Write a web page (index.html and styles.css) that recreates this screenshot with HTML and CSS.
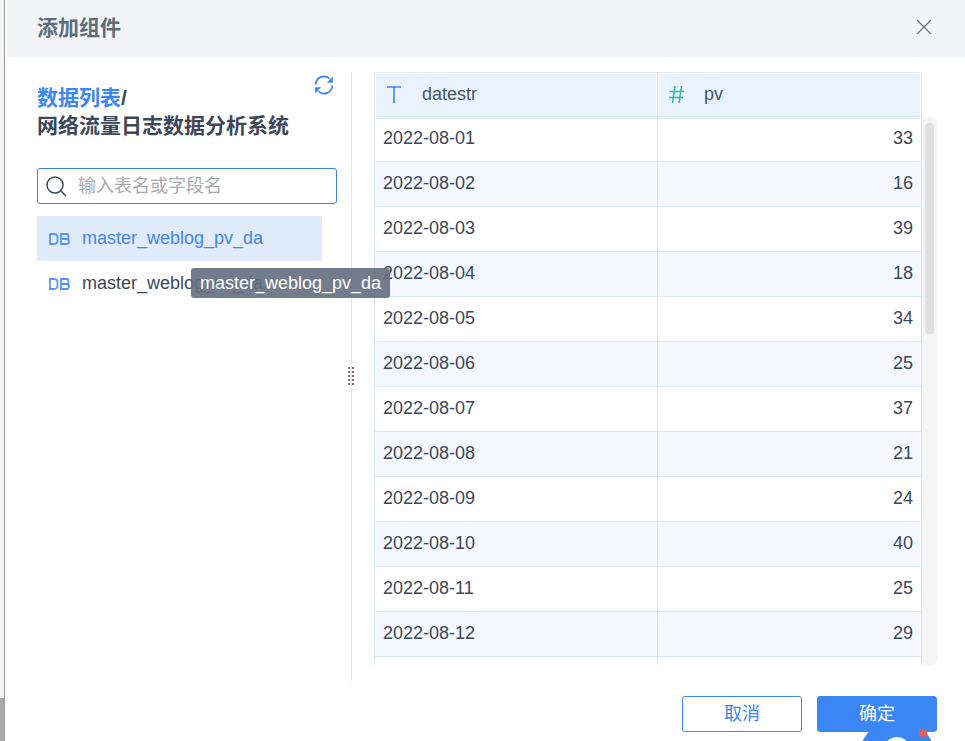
FILE: index.html
```html
<!DOCTYPE html>
<html lang="zh-CN">
<head>
    <meta charset="UTF-8">
    <title>添加组件</title>
    <link rel="stylesheet" href="styles.css">
</head>
<body>
    <div class="page-edge"><div class="edge-dark"></div></div>
    <div class="dialog">
        <div class="dialog-header">
            <span class="dialog-title">添加组件</span>
            <svg class="close-icon" width="16" height="16" viewBox="0 0 16 16"><path d="M1 1L15 15M15 1L1 15" stroke="#6b7785" stroke-width="1.3" fill="none"/></svg>
        </div>

        <div class="dialog-body">
            <div class="side">
                <div class="side-title">
                    <div><a class="crumb">数据列表</a>/</div>
                    <div>网络流量日志数据分析系统</div>
                    <svg class="refresh-icon" width="20" height="20" viewBox="0 0 20 20">
                        <path d="M1.6 9.5A8.4 8.4 0 0 1 15.6 3.6" fill="none" stroke="#3b86f5" stroke-width="1.8"/>
                        <path d="M18.4 10.5A8.4 8.4 0 0 1 4.4 16.4" fill="none" stroke="#3b86f5" stroke-width="1.8"/>
                        <path d="M18.8 1.6V7.8H12.8Z" fill="#3b86f5"/>
                        <path d="M1.2 18.4V12.2H7.2Z" fill="#3b86f5"/>
                    </svg>
                </div>
                <div class="search-box">
                    <svg width="21" height="21" viewBox="0 0 21 21" fill="none" stroke="#3c4a5e" stroke-width="1.5"><circle cx="9" cy="9" r="8"/><path d="M15 15L20 20"/></svg>
                    <span class="search-placeholder">输入表名或字段名</span>
                </div>
                <ul class="table-list">
                    <li class="table-item active">
                        <svg class="db-icon" width="21" height="12" viewBox="0 0 21 12" fill="none" stroke="#5a94f7" stroke-width="1.8"><path d="M1 1H5Q8.5 1 8.5 4.5V7.5Q8.5 11 5 11H1Z"/><path d="M12 1H17.5Q19.5 1 19.5 3.5T17.5 6H12ZM12 6H17.5Q20 6 20 8.5T17.5 11H12Z"/></svg>
                        <span>master_weblog_pv_da</span>
                    </li>
                    <li class="table-item">
                        <svg class="db-icon" width="21" height="12" viewBox="0 0 21 12" fill="none" stroke="#5a94f7" stroke-width="1.8"><path d="M1 1H5Q8.5 1 8.5 4.5V7.5Q8.5 11 5 11H1Z"/><path d="M12 1H17.5Q19.5 1 19.5 3.5T17.5 6H12ZM12 6H17.5Q20 6 20 8.5T17.5 11H12Z"/></svg>
                        <span>master_weblog_uv_da</span>
                    </li>
                </ul>
                <div class="tooltip">master_weblog_pv_da</div>
            </div>

            <div class="divider">
                <svg class="drag-handle" width="6" height="18" viewBox="0 0 6 18">
                    <defs><pattern id="dots" width="4" height="4" patternUnits="userSpaceOnUse"><rect width="2" height="2" fill="#8a5f70"/></pattern></defs>
                    <rect width="6" height="18" fill="url(#dots)"/>
                </svg>
            </div>

            <div class="preview">
                <div class="table-wrap">
                    <div class="grid-row grid-head">
                        <div class="cell head-cell">
                            <svg class="type-icon" width="14" height="17" viewBox="0 0 14 17" fill="none" stroke="#3b86f5" stroke-width="1.6"><path d="M0 1H14M7 1V17"/></svg>
                            <span class="head-label">datestr</span>
                        </div>
                        <div class="cell head-cell">
                            <svg class="type-icon" width="15" height="17" viewBox="0 0 15 17" fill="none" stroke="#36b5a8" stroke-width="1.5"><path d="M6 0L3.5 17M12.5 0L10 17M0.5 5.5H15M0 11.5H14"/></svg>
                            <span class="head-label">pv</span>
                        </div>
                    </div>
                    <div class="rows-scroll">
                        <div class="rows">
                            <div class="grid-row"><div class="cell">2022-08-01</div><div class="cell num">33</div></div>
                            <div class="grid-row"><div class="cell">2022-08-02</div><div class="cell num">16</div></div>
                            <div class="grid-row"><div class="cell">2022-08-03</div><div class="cell num">39</div></div>
                            <div class="grid-row"><div class="cell">2022-08-04</div><div class="cell num">18</div></div>
                            <div class="grid-row"><div class="cell">2022-08-05</div><div class="cell num">34</div></div>
                            <div class="grid-row"><div class="cell">2022-08-06</div><div class="cell num">25</div></div>
                            <div class="grid-row"><div class="cell">2022-08-07</div><div class="cell num">37</div></div>
                            <div class="grid-row"><div class="cell">2022-08-08</div><div class="cell num">21</div></div>
                            <div class="grid-row"><div class="cell">2022-08-09</div><div class="cell num">24</div></div>
                            <div class="grid-row"><div class="cell">2022-08-10</div><div class="cell num">40</div></div>
                            <div class="grid-row"><div class="cell">2022-08-11</div><div class="cell num">25</div></div>
                            <div class="grid-row"><div class="cell">2022-08-12</div><div class="cell num">29</div></div>
                            <div class="grid-row"><div class="cell"></div><div class="cell num"></div></div>
                        </div>
                        <div class="scroll-track"><div class="scroll-thumb"></div></div>
                    </div>
                </div>
            </div>
        </div>

        <div class="dialog-footer">
            <button class="btn btn-plain">取消</button>
            <button class="btn btn-primary">确定</button>
        </div>

        <div class="float-ball"><div class="float-hole"></div></div>
        <div class="float-dot"></div>
    </div>
</body>
</html>
```

FILE: styles.css
```css
* {
    box-sizing: border-box;
}

body {
    margin: 0;
    width: 965px;
    height: 741px;
    overflow: hidden;
    display: flex;
    background-color: #fff;
    font-family: "Liberation Sans", "Noto Sans CJK SC", sans-serif;
    color: #3d4757;
}

.page-edge {
    width: 5px;
    background-color: #f5f5f5;
    border-right: 1px solid #9a9a9a;
    display: flex;
    align-items: flex-end;
    flex-shrink: 0;
}

.edge-dark {
    width: 100%;
    height: 43px;
    background-color: #aaa;
}

.dialog {
    flex: 1;
    position: relative;
    display: flex;
    flex-direction: column;
    overflow: hidden;
}

.dialog-header {
    height: 57px;
    margin-left: 2px;
    padding: 0 33px 3px 30px;
    background-color: #f2f4f8;
    display: flex;
    align-items: center;
    justify-content: space-between;
    flex-shrink: 0;
}

.dialog-title {
    font-size: 21px;
    font-weight: bold;
    padding-bottom: 3px;
    color: #606c78;
}

.dialog-body {
    display: flex;
    height: 624px;
    padding-top: 15px;
    flex-shrink: 0;
}

.side {
    width: 346px;
    padding: 0 29px 0 32px;
    position: relative;
}

.side-title {
    position: relative;
    padding-top: 12px;
    font-size: 21px;
    line-height: 28px;
    font-weight: bold;
    color: #3d4757;
    white-space: nowrap;
}

.crumb {
    color: #3b86f5;
}

.refresh-icon {
    position: absolute;
    right: -12px;
    top: 3px;
}

.search-box {
    margin-top: 28px;
    width: 300px;
    height: 36px;
    border: 1px solid #3b82e8;
    border-radius: 3px;
    padding-left: 8px;
    display: flex;
    align-items: center;
    gap: 11px;
}

.search-placeholder {
    font-size: 18px;
    padding-bottom: 4px;
    color: #a8abb2;
}

.table-list {
    list-style: none;
    margin: 12px 0 0;
    padding: 0;
}

.table-item {
    height: 45px;
    padding-left: 12px;
    display: flex;
    align-items: center;
    gap: 12px;
    font-size: 18px;
    color: #3d4757;
    white-space: nowrap;
}

.table-item.active {
    background-color: #e0ebfc;
    color: #4585ef;
}

.db-icon {
    flex-shrink: 0;
}

.tooltip {
    position: absolute;
    left: 186px;
    top: 196px;
    z-index: 2;
    height: 30px;
    padding: 0 9px;
    background-color: rgba(100, 110, 127, 0.9);
    border-radius: 3px;
    color: #fff;
    font-size: 18px;
    line-height: 30px;
    white-space: nowrap;
}

.divider {
    width: 1px;
    height: 609px;
    background-color: #e4e6ea;
    position: relative;
    flex-shrink: 0;
}

.drag-handle {
    position: absolute;
    left: -3px;
    top: 295px;
}

.preview {
    padding-left: 22px;
    flex: 1;
}

.table-wrap {
    width: 563px;
}

.grid-row {
    display: grid;
    grid-template-columns: 283px 264px;
    height: 45px;
    width: 547px;
}

.grid-head {
    height: 44px;
}

.cell {
    border: 1px solid #d6e6fb;
    margin-right: -1px;
    margin-bottom: -1px;
    padding: 0 8px;
    font-size: 18px;
    line-height: 43px;
}

.rows .grid-row:nth-child(even) .cell {
    background-color: #f4f8fe;
}

.num {
    text-align: right;
}

.head-cell {
    background-color: #eaf2fd;
    border-color: #dfeafa;
    box-shadow: inset 0 0 0 1px #fff;
    padding: 0 0 2px 12px;
    color: #4a5568;
    display: flex;
    align-items: center;
}

.type-icon {
    flex-shrink: 0;
}

.head-label {
    margin-left: 21px;
}

.head-cell + .head-cell {
    padding-left: 11px;
}

.head-cell + .head-cell .head-label {
    margin-left: 20px;
}

.rows-scroll {
    position: relative;
    height: 549px;
    overflow: hidden;
}

.scroll-track {
    position: absolute;
    left: 548px;
    top: 1px;
    width: 15px;
    height: 548px;
    background-color: #f5f5f5;
    border-radius: 6px;
    padding: 6px 3px;
}

.scroll-thumb {
    height: 211px;
    background-color: #dfe0e4;
    border-radius: 4px;
}

.dialog-footer {
    height: 60px;
    padding: 15px 28px 0 0;
    display: flex;
    justify-content: flex-end;
    gap: 15px;
    flex-shrink: 0;
}

.btn {
    width: 120px;
    height: 36px;
    border-radius: 3px;
    border: 1px solid #3b86f5;
    font-family: inherit;
    font-size: 18px;
    padding: 0 0 5px;
}

.btn-plain {
    background-color: #fff;
    color: #3b86f5;
}

.btn-primary {
    background-color: #3b86f5;
    color: #fff;
    position: relative;
    z-index: 1;
}

.float-ball {
    position: absolute;
    left: 854px;
    top: 719px;
    width: 76px;
    height: 76px;
    border-radius: 50%;
    background-color: #3b86f5;
}

.float-hole {
    width: 26px;
    height: 26px;
    margin: 18px auto 0;
    border-radius: 50%;
    background-color: #fff;
}

.float-dot {
    position: absolute;
    left: 914px;
    top: 729px;
    width: 8px;
    height: 8px;
    border-radius: 50%;
    background-color: #e85a5a;
    z-index: 2;
}
```
